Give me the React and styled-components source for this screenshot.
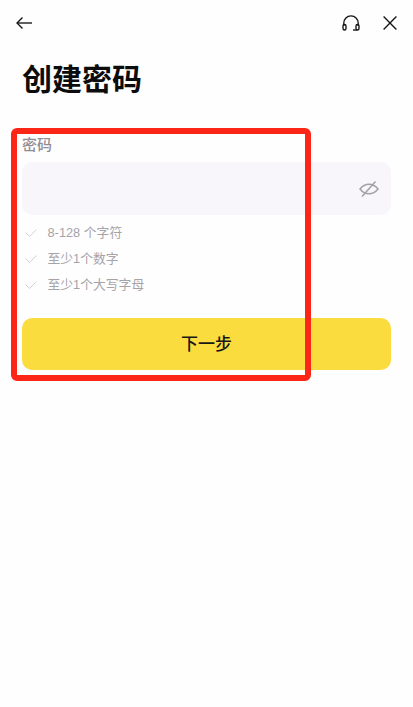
import React from "react";
import styled, { createGlobalStyle } from "styled-components";

const GlobalStyle = createGlobalStyle`
  html, body {
    margin: 0;
    padding: 0;
    background: #fff;
  }
  body {
    font-family: "Liberation Sans", "Noto Sans CJK SC", sans-serif;
  }
`;

const rules = ["8-128 个字符", "至少1个数字", "至少1个大写字母"];

const BackIcon = () => (
  <svg width="16" height="12" viewBox="0 0 16 12" fill="none" stroke="currentColor" strokeWidth="1.35">
    <path d="M16 6H1" />
    <path d="M6.500 .5 1 6l5.500 5.500" />
  </svg>
);

const HeadsetIcon = () => (
  <svg width="18" height="16" viewBox="0 0 18 16" fill="none" stroke="currentColor" strokeWidth="1.35">
    <path d="M1.800 11V8a7.200 7.200 0 0 1 14.400 0v3" />
    <rect x="1" y="9.500" width="3" height="5.500" rx="1.500" />
    <rect x="14" y="9.500" width="3" height="5.500" rx="1.500" />
    <path d="M11 15h4" />
  </svg>
);

const CloseIcon = () => (
  <svg width="14" height="14" viewBox="0 0 14 14" fill="none" stroke="currentColor" strokeWidth="1.35">
    <path d="M.6.6l12.800 12.800M13.400.6.6 13.400" />
  </svg>
);

const EyeSlashIcon = () => (
  <svg width="20" height="16" viewBox="0 0 20 16" fill="none" stroke="currentColor" strokeWidth="1.5">
    <path d="M1 8c2.500-3.200 5.500-4.800 9-4.800s6.500 1.600 9 4.800c-2.500 3.200-5.500 4.800-9 4.800S3.500 11.200 1 8z" />
    <path d="M3 15.500 16.500 .5" />
  </svg>
);

const CheckIcon = () => (
  <svg width="12" height="8" viewBox="0 0 12 8" fill="none" stroke="currentColor" strokeWidth="1">
    <path d="M.5 3.500 4.500 7.500 11.500.5" />
  </svg>
);

const App = () => {
  return (
    <Page>
      <GlobalStyle />
      <TopBar>
        <BackIcon />
        <TopActions>
          <HeadsetIcon />
          <CloseIcon />
        </TopActions>
      </TopBar>
      <Title>创建密码</Title>
      <Form>
        <Label>密码</Label>
        <PasswordField>
          <EyeSlashIcon />
        </PasswordField>
        <Rules>
          {rules.map((rule) => (
            <Rule key={rule}>
              <CheckIcon />
              <span>{rule}</span>
            </Rule>
          ))}
        </Rules>
        <NextButton>下一步</NextButton>
      </Form>
      <Highlight />
    </Page>
  );
};

const Page = styled.div`
  position: relative;
  width: 413px;
  height: 707px;
  overflow: hidden;
  background: #fffeff;
  box-sizing: border-box;
  padding: 13px 16px 0 22px;
`;

const TopBar = styled.div`
  display: flex;
  align-items: center;
  justify-content: space-between;
  margin-left: -6px;
  height: 20px;
  color: #141414;
`;

const TopActions = styled.div`
  display: flex;
  align-items: center;
  gap: 23px;
`;

const Title = styled.h1`
  margin: 29px 0 0;
  font-size: 30px;
  line-height: 36px;
  font-weight: 700;
  color: #0c0c0c;
`;

const Form = styled.div`
  width: 369px;
  margin-top: 38px;
  display: flex;
  flex-direction: column;
`;

const Label = styled.div`
  font-size: 15px;
  line-height: 18px;
  font-weight: 500;
  color: #8f8c92;
`;

const PasswordField = styled.div`
  height: 53px;
  margin-top: 8px;
  border-radius: 10px;
  background: #f8f6fa;
  display: flex;
  align-items: center;
  justify-content: flex-end;
  padding-right: 12px;
  color: #a3a1a6;
`;

const Rules = styled.div`
  margin-top: 3px;
  display: flex;
  flex-direction: column;
`;

const Rule = styled.div`
  height: 26px;
  display: flex;
  align-items: center;
  gap: 10.5px;
  padding-left: 3px;
  font-size: 12.8px;
  color: #a5a3a8;

  svg {
    color: #d4d2d7;
    margin-top: 3px;
  }
`;

const NextButton = styled.button`
  margin-top: 22px;
  height: 52px;
  padding: 0 0 3px;
  border: none;
  border-radius: 10px;
  background: #fadc3e;
  font-family: inherit;
  font-size: 17px;
  font-weight: 500;
  color: #161616;
`;

// red marker drawn over the form
const Highlight = styled.div`
  position: absolute;
  left: 11px;
  top: 128px;
  width: 300px;
  height: 253px;
  box-sizing: border-box;
  border: 6px solid #fb2518;
  border-radius: 6px;
  pointer-events: none;
`;

export default App;
